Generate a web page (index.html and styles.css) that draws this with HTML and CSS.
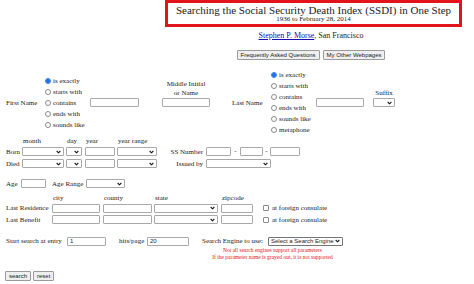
FILE: index.html
```html
<!DOCTYPE html>
<html lang="en">
<head>
<meta charset="utf-8">
<title>Searching the Social Security Death Index (SSDI) in One Step</title>
<link rel="stylesheet" href="styles.css">
</head>
<body>
<header class="head">
  <div class="title-box">
    <h1 class="title">Searching the Social Security Death Index (SSDI) in One Step</h1>
    <div class="sub">1936 to February 28, 2014</div>
  </div>
  <p class="author"><a href="#" class="link">Stephen P. Morse</a>, San Francisco</p>
  <div class="links">
    <button type="button" class="btn">Frequently Asked Questions</button>
    <button type="button" class="btn">My Other Webpages</button>
  </div>
</header>

<form class="form">
  <div class="names">
    <span class="lbl fn-lbl">First Name</span>
    <div class="radios r1">
      <label class="radio"><input type="radio" name="fn" checked><span>is exactly</span></label>
      <label class="radio"><input type="radio" name="fn"><span>starts with</span></label>
      <label class="radio"><input type="radio" name="fn"><span>contains</span></label>
      <label class="radio"><input type="radio" name="fn"><span>ends with</span></label>
      <label class="radio"><input type="radio" name="fn"><span>sounds like</span></label>
    </div>
    <input type="text" class="txt w49">
    <div class="stack mid">
      <span class="stack-lbl two">Middle Initial<br>or Name</span>
      <input type="text" class="txt w48">
    </div>
    <span class="lbl ln-lbl">Last Name</span>
    <div class="radios r2">
      <label class="radio"><input type="radio" name="ln" checked><span>is exactly</span></label>
      <label class="radio"><input type="radio" name="ln"><span>starts with</span></label>
      <label class="radio"><input type="radio" name="ln"><span>contains</span></label>
      <label class="radio"><input type="radio" name="ln"><span>ends with</span></label>
      <label class="radio"><input type="radio" name="ln"><span>sounds like</span></label>
      <label class="radio"><input type="radio" name="ln"><span>metaphone</span></label>
    </div>
    <input type="text" class="txt w48">
    <div class="stack suffix">
      <span class="stack-lbl one">Suffix</span>
      <span class="sel w22"><select><option></option></select><svg class="chev" viewBox="0 0 6 4"><path d="M0.8 0.8 L3 3 L5.2 0.8"/></svg></span>
    </div>
  </div>

  <div class="dates">
    <span></span><span class="hd">month</span><span class="hd">day</span><span class="hd">year</span><span class="hd">year range</span><span></span><span></span>

    <span class="lbl">Born</span>
    <span class="sel w42"><select><option></option></select><svg class="chev" viewBox="0 0 6 4"><path d="M0.8 0.8 L3 3 L5.2 0.8"/></svg></span>
    <span class="sel w16"><select><option></option></select><svg class="chev" viewBox="0 0 6 4"><path d="M0.8 0.8 L3 3 L5.2 0.8"/></svg></span>
    <input type="text" class="txt w30">
    <span class="sel w40"><select><option></option></select><svg class="chev" viewBox="0 0 6 4"><path d="M0.8 0.8 L3 3 L5.2 0.8"/></svg></span>
    <span class="lbl rt">SS Number</span>
    <span class="ss">
      <input type="text" class="txt w25"><span class="dash d9">-</span><input type="text" class="txt w23"><span class="dash d7">-</span><input type="text" class="txt w30">
    </span>

    <span class="lbl">Died</span>
    <span class="sel w42"><select><option></option></select><svg class="chev" viewBox="0 0 6 4"><path d="M0.8 0.8 L3 3 L5.2 0.8"/></svg></span>
    <span class="sel w16"><select><option></option></select><svg class="chev" viewBox="0 0 6 4"><path d="M0.8 0.8 L3 3 L5.2 0.8"/></svg></span>
    <input type="text" class="txt w30">
    <span class="sel w40"><select><option></option></select><svg class="chev" viewBox="0 0 6 4"><path d="M0.8 0.8 L3 3 L5.2 0.8"/></svg></span>
    <span class="lbl rt">Issued by</span>
    <span class="sel w65"><select><option></option></select><svg class="chev" viewBox="0 0 6 4"><path d="M0.8 0.8 L3 3 L5.2 0.8"/></svg></span>
  </div>

  <div class="age">
    <span class="lbl age-lbl">Age</span>
    <input type="text" class="txt w25">
    <span class="lbl range-lbl">Age Range</span>
    <span class="sel w39"><select><option></option></select><svg class="chev" viewBox="0 0 6 4"><path d="M0.8 0.8 L3 3 L5.2 0.8"/></svg></span>
  </div>

  <div class="places">
    <span></span><span class="hd">city</span><span class="hd">county</span><span class="hd">state</span><span class="hd">zipcode</span><span></span>

    <span class="lbl">Last Residence</span>
    <input type="text" class="txt w48">
    <input type="text" class="txt w49">
    <span class="sel w64"><select><option></option></select><svg class="chev" viewBox="0 0 6 4"><path d="M0.8 0.8 L3 3 L5.2 0.8"/></svg></span>
    <input type="text" class="txt w32">
    <label class="check"><input type="checkbox"><span>at foreign consulate</span></label>

    <span class="lbl">Last Benefit</span>
    <input type="text" class="txt w48">
    <input type="text" class="txt w49">
    <span class="sel w64"><select><option></option></select><svg class="chev" viewBox="0 0 6 4"><path d="M0.8 0.8 L3 3 L5.2 0.8"/></svg></span>
    <input type="text" class="txt w32">
    <label class="check"><input type="checkbox"><span>at foreign consulate</span></label>
  </div>

  <div class="search-row">
    <span class="lbl start-lbl">Start search at entry</span>
    <input type="text" class="txt w39" value="1">
    <span class="lbl hits-lbl">hits/page</span>
    <input type="text" class="txt w42" value="20">
    <div class="engine">
      <div class="engine-line">
        <span class="lbl engine-lbl">Search Engine to use:</span>
        <span class="sel w75"><select class="dark"><option>Select a Search Engine</option></select><svg class="chev" viewBox="0 0 6 4"><path d="M0.8 0.8 L3 3 L5.2 0.8"/></svg></span>
      </div>
      <div class="notes">Not all search engines support all parameters<br>If the parameter name is grayed out, it is not supported</div>
    </div>
  </div>

  <div class="actions">
    <button type="submit" class="btn">search</button>
    <button type="reset" class="btn">reset</button>
  </div>
</form>
</body>
</html>
```

FILE: styles.css
```css
html, body {
  margin: 0;
  padding: 0;
  background: #fff;
}
body {
  font-family: "Liberation Serif", "Times New Roman", serif;
  font-size: 7px;
  color: #222;
  width: 474px;
  height: 284px;
  overflow: hidden;
}

/* ---------- header ---------- */
.head {
  margin-left: 165px;
  width: 297px;
  text-align: center;
}
.title-box {
  box-sizing: border-box;
  height: 27px;
  border: 3px solid #e3131b;
  padding-top: 1px;
}
.title {
  margin: 0;
  font-size: 11px;
  font-weight: normal;
  line-height: 12px;
}
.sub {
  font-size: 7px;
  line-height: 7px;
}
.author {
  margin: 4px 5px 0 0;
  font-size: 8px;
  line-height: 10px;
}
.link {
  color: #1a0dab;
  text-decoration: underline;
}
.links {
  margin: 9px 5px 0 0;
  display: flex;
  justify-content: center;
  gap: 3px;
  height: 10px;
}
.btn {
  box-sizing: border-box;
  height: 10px;
  padding: 0 3px;
  font-family: "Liberation Sans", Arial, sans-serif;
  font-size: 6px;
  line-height: 8px;
  color: #222;
  background: #efefef;
  border: 1px solid #9a9a9a;
  border-radius: 1px;
}

/* ---------- form controls ---------- */
.form {
  padding-left: 6px;
}
.lbl {
  white-space: nowrap;
  color: #222;
}
.txt {
  box-sizing: border-box;
  height: 9px;
  margin: 0;
  padding: 0 2px;
  border: 1px solid #a8a8a8;
  border-radius: 1px;
  background: #fff;
  font-family: "Liberation Sans", Arial, sans-serif;
  font-size: 6px;
  color: #222;
  outline: none;
}
.sel {
  display: inline-grid;
  height: 9px;
}
.sel > select,
.sel > .chev {
  grid-area: 1 / 1;
}
.sel > select {
  appearance: none;
  -webkit-appearance: none;
  box-sizing: border-box;
  width: 100%;
  height: 9px;
  margin: 0;
  padding: 0 8px 0 2px;
  border: 1px solid #a8a8a8;
  border-radius: 1px;
  background: #fff;
  font-family: "Liberation Sans", Arial, sans-serif;
  font-size: 6px;
  line-height: 7px;
  color: #222;
}
.sel > select.dark {
  border-color: #767676;
}
.chev {
  justify-self: end;
  align-self: center;
  width: 5px;
  height: 4px;
  margin-right: 3px;
  fill: none;
  stroke: #111;
  stroke-width: 1.3;
  pointer-events: none;
}

.w16 { width: 16px; }
.w22 { width: 22px; }
.w23 { width: 23px; }
.w25 { width: 25px; }
.w30 { width: 30px; }
.w32 { width: 32px; }
.w39 { width: 39px; }
.w40 { width: 40px; }
.w42 { width: 42px; }
.w48 { width: 48px; }
.w49 { width: 49px; }
.w64 { width: 64px; }
.w65 { width: 65px; }
.w75 { width: 75px; }

/* ---------- name block ---------- */
.names {
  margin-top: 9.5px;
  display: flex;
  align-items: center;
}
.fn-lbl { width: 39px; }
.ln-lbl { width: 39px; margin-left: 21px; }
.radios {
  width: 45px;
  display: flex;
  flex-direction: column;
}
.radio {
  height: 11px;
  display: flex;
  align-items: center;
  gap: 2px;
  white-space: nowrap;
  color: #222;
}
.radio input {
  appearance: none;
  -webkit-appearance: none;
  box-sizing: border-box;
  width: 6px;
  height: 6px;
  margin: 0;
  border: 1px solid #8a8a8a;
  border-radius: 50%;
  background: #fff;
}
.radio input:checked {
  border-color: #2f7be8;
  background: radial-gradient(circle, #1f6fe5 0 55%, #8fb8f5 75%);
}
.stack {
  display: flex;
  flex-direction: column;
  align-items: center;
}
.stack-lbl {
  text-align: center;
  white-space: nowrap;
  color: #222;
}
.mid {
  width: 50px;
  margin-left: 22px;
  padding-bottom: 18px;
}
.stack-lbl.two {
  line-height: 9px;
  height: 18px;
}
.suffix {
  width: 22px;
  margin-left: 9px;
  padding-bottom: 9px;
}
.stack-lbl.one {
  line-height: 9px;
  height: 9px;
}

/* ---------- dates ---------- */
.dates {
  display: grid;
  grid-template-columns: 16px 44px 19px 32px 49px 40px auto;
  grid-template-rows: 10px 12px 12px;
  align-items: center;
}
.hd {
  padding-left: 1px;
  white-space: nowrap;
}
.rt {
  text-align: right;
  padding-right: 3px;
}
.ss {
  display: flex;
  align-items: center;
}
.dash {
  text-align: center;
  line-height: 9px;
}
.d9 { width: 9px; }
.d7 { width: 7px; }

/* ---------- age ---------- */
.age {
  margin-top: 8px;
  height: 12px;
  display: flex;
  align-items: center;
}
.age-lbl { width: 15px; }
.range-lbl { width: 34px; margin-left: 6px; }

/* ---------- places ---------- */
.places {
  margin-top: 4px;
  display: grid;
  grid-template-columns: 46px 51px 51px 67px 42px auto;
  grid-template-rows: 9px 11px 12px;
  align-items: center;
}
.check {
  display: flex;
  align-items: center;
  gap: 3px;
  white-space: nowrap;
  color: #222;
}
.check input {
  appearance: none;
  -webkit-appearance: none;
  box-sizing: border-box;
  width: 6px;
  height: 6px;
  margin: 0;
  border: 1px solid #8a8a8a;
  border-radius: 1px;
  background: #fff;
}

/* ---------- search row ---------- */
.search-row {
  margin-top: 9.5px;
  display: flex;
  align-items: flex-start;
}
.search-row > .lbl,
.search-row > .txt {
  margin-top: 1.5px;
}
.start-lbl { width: 61px; line-height: 9px; }
.hits-lbl { width: 28px; margin-left: 13px; line-height: 9px; }
.engine {
  margin-left: 13px;
  display: flex;
  flex-direction: column;
}
.engine-line {
  height: 12px;
  display: flex;
  align-items: center;
}
.engine-lbl { width: 66px; }
.notes {
  text-align: center;
  color: #e8101a;
  font-size: 5.5px;
  line-height: 7px;
  white-space: nowrap;
}

/* ---------- actions ---------- */
.actions {
  margin: 10px 0 0 -1px;
  display: flex;
  gap: 2px;
}
.actions .btn {
  height: 9.5px;
  padding: 0 3px;
}
```
